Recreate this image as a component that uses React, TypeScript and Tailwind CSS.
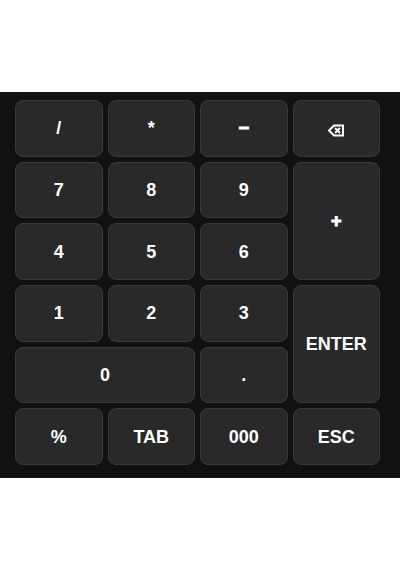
import React from 'react';

type Key = {
    label: string;
    name?: string;
    style?: string;
};

const keys: Key[] = [
    {label: "/"},
    {label: "*"},
    {label: "−", style: "[-webkit-text-stroke:1px_white]"},
    {label: "⌫", name: "Backspace"},
    {label: "7"},
    {label: "8"},
    {label: "9"},
    {label: "+", style: "row-span-2 [-webkit-text-stroke:1px_white]"},
    {label: "4"},
    {label: "5"},
    {label: "6"},
    {label: "1"},
    {label: "2"},
    {label: "3"},
    {label: "ENTER", style: "row-span-2"},
    {label: "0", style: "col-span-2"},
    {label: "."},
    {label: "%"},
    {label: "TAB"},
    {label: "000"},
    {label: "ESC"},
];

const BackspaceIcon = () => (
    <svg width="18" height="18" viewBox="0 0 18 18" fill="none" stroke="currentColor" strokeWidth="2">
        <path d="M7 6.5h9v10H7l-5-5z"/>
        <path d="M8 9l5 5M13 9l-5 5"/>
    </svg>
);

const App = () => {
    return (
        <div className="min-h-screen bg-white flex flex-col justify-center font-['Liberation_Sans',Arial,sans-serif]">
            <main className="bg-[#111111] pt-2 pb-[13px] pl-[15px] pr-5">
                <div className="grid aspect-square grid-cols-4 grid-rows-6 gap-[5px]">
                    {keys.map((key) => (
                        <button
                            key={key.label}
                            type="button"
                            aria-label={key.name}
                            className={`flex items-center justify-center rounded-lg border border-[#3a3a3a] bg-[#292929] text-lg font-bold text-white ${key.style ?? ""}`}
                        >
                            {key.name ? <BackspaceIcon/> : key.label}
                        </button>
                    ))}
                </div>
            </main>
        </div>
    );
};

export default App;
